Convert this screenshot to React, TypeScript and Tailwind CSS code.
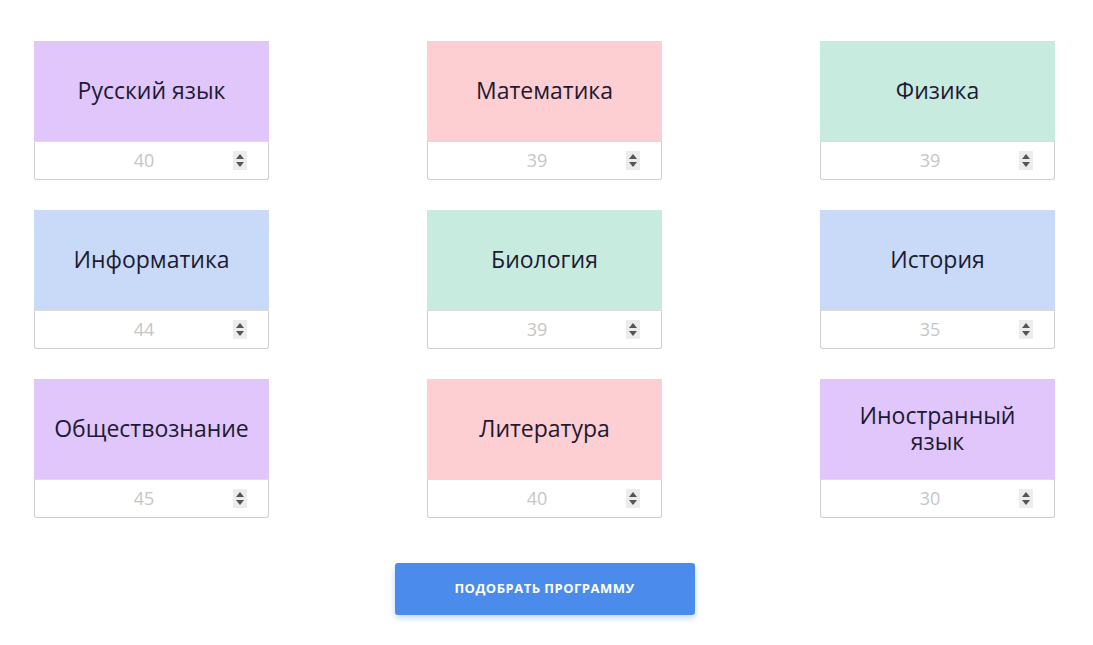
import React from 'react';

type Subject = { name: string; value: number; color: string };

const subjects: Subject[] = [
  { name: 'Русский язык', value: 40, color: 'bg-[#e0c6fb]' },
  { name: 'Математика', value: 39, color: 'bg-[#fdced2]' },
  { name: 'Физика', value: 39, color: 'bg-[#c8ebdf]' },
  { name: 'Информатика', value: 44, color: 'bg-[#c8daf7]' },
  { name: 'Биология', value: 39, color: 'bg-[#c8ebdf]' },
  { name: 'История', value: 35, color: 'bg-[#c8daf7]' },
  { name: 'Обществознание', value: 45, color: 'bg-[#e0c6fb]' },
  { name: 'Литература', value: 40, color: 'bg-[#fdced2]' },
  { name: 'Иностранный язык', value: 30, color: 'bg-[#e0c6fb]' },
];

const Spinner = () => (
  <div className="w-[14px] h-[19px] bg-[#ececec] flex flex-col items-center justify-center gap-[3px]">
    <svg width="8" height="5" viewBox="0 0 8 5">
      <path d="M4 0 L8 5 L0 5 Z" fill="#555" />
    </svg>
    <svg width="8" height="5" viewBox="0 0 8 5">
      <path d="M0 0 L8 0 L4 5 Z" fill="#555" />
    </svg>
  </div>
);

const SubjectCard = ({ subject }: { subject: Subject }) => (
  <div className="w-[235px] flex flex-col">
    <div className={`${subject.color} h-[100px] flex items-center justify-center px-8 pb-[3px] text-center text-[23px] leading-[26px] text-[#1d1a33]`}>
      {subject.name}
    </div>
    <div className="h-[39px] border border-[#cfcfcf] border-t-[#dcdcdc] rounded-b-[3px] flex items-center pl-[20px] pr-[21px]">
      <span className="flex-1 text-center text-[18px] text-[#c6c6c6]">{subject.value}</span>
      <Spinner />
    </div>
  </div>
);

export default function App() {
  return (
    <div className="min-h-screen bg-white pt-[41px] pl-[34px]" style={{ fontFamily: '"Open Sans", "Liberation Sans", sans-serif' }}>
      <div className="w-[1021px] flex flex-col items-center">
        <div className="grid grid-cols-[235px_235px_235px] gap-x-[158px] gap-y-[30px]">
          {subjects.map((s) => (
            <SubjectCard key={s.name} subject={s} />
          ))}
        </div>
        <button className="mt-[45px] w-[300px] h-[52px] rounded-[3px] bg-[#4a8beb] text-white text-[13px] font-bold tracking-[0.5px] uppercase shadow-[0_3px_6px_rgba(74,139,235,0.35)]">
          Подобрать программу
        </button>
      </div>
    </div>
  );
}
